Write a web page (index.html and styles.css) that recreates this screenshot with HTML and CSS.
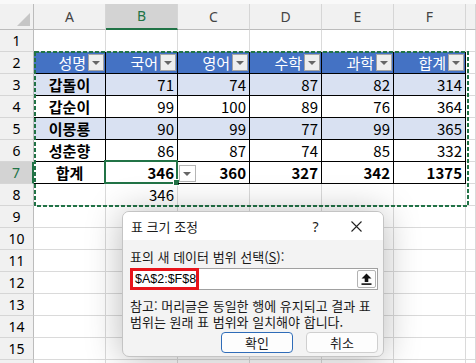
FILE: index.html
```html
<!DOCTYPE html>
<html lang="ko">
<head>
    <meta charset="UTF-8">
    <meta name="viewport" content="width=device-width, initial-scale=1.0">
    <title>표 크기 조정</title>
    <link rel="stylesheet" href="styles.css">
</head>
<body>
<div class="app">
    <div class="topstrip"></div>

    <div class="sheet">
        <div class="row colhead">
            <div class="corner"><span class="tri"></span></div>
            <div class="ch">A</div>
            <div class="ch sel">B</div>
            <div class="ch">C</div>
            <div class="ch">D</div>
            <div class="ch">E</div>
            <div class="ch">F</div>
            <div class="ch fill"></div>
        </div>

        <div class="row">
            <div class="rh">1</div>
            <div class="c"></div><div class="c"></div><div class="c"></div>
            <div class="c"></div><div class="c"></div><div class="c"></div>
            <div class="c fill"></div>
        </div>

        <div class="row thead">
            <div class="rh">2</div>
            <div class="c th"><span>성명</span><i class="flt"></i></div>
            <div class="c th"><span>국어</span><i class="flt"></i></div>
            <div class="c th"><span>영어</span><i class="flt"></i></div>
            <div class="c th"><span>수학</span><i class="flt"></i></div>
            <div class="c th"><span>과학</span><i class="flt"></i></div>
            <div class="c th"><span>합계</span><i class="flt"></i></div>
            <div class="c fill"></div>
        </div>

        <div class="row band">
            <div class="rh">3</div>
            <div class="c td name">갑돌이</div>
            <div class="c td num">71</div>
            <div class="c td num">74</div>
            <div class="c td num">87</div>
            <div class="c td num">82</div>
            <div class="c td num">314</div>
            <div class="c fill"></div>
        </div>

        <div class="row">
            <div class="rh">4</div>
            <div class="c td name">갑순이</div>
            <div class="c td num">99</div>
            <div class="c td num">100</div>
            <div class="c td num">89</div>
            <div class="c td num">76</div>
            <div class="c td num">364</div>
            <div class="c fill"></div>
        </div>

        <div class="row band">
            <div class="rh">5</div>
            <div class="c td name">이몽룡</div>
            <div class="c td num">90</div>
            <div class="c td num">99</div>
            <div class="c td num">77</div>
            <div class="c td num">99</div>
            <div class="c td num">365</div>
            <div class="c fill"></div>
        </div>

        <div class="row">
            <div class="rh">6</div>
            <div class="c td name">성춘향</div>
            <div class="c td num">86</div>
            <div class="c td num">87</div>
            <div class="c td num">74</div>
            <div class="c td num">85</div>
            <div class="c td num">332</div>
            <div class="c fill"></div>
        </div>

        <div class="row total">
            <div class="rh sel">7</div>
            <div class="c td name">합계</div>
            <div class="c td num active">346</div>
            <div class="c td num drop-host">360<i class="tdrop"></i></div>
            <div class="c td num">327</div>
            <div class="c td num">342</div>
            <div class="c td num">1375</div>
            <div class="c fill"></div>
        </div>

        <div class="row">
            <div class="rh">8</div>
            <div class="c"></div>
            <div class="c num">346</div>
            <div class="c"></div><div class="c"></div><div class="c"></div><div class="c"></div>
            <div class="c fill"></div>
        </div>

        <div class="row"><div class="rh">9</div><div class="c"></div><div class="c"></div><div class="c"></div><div class="c"></div><div class="c"></div><div class="c"></div><div class="c fill"></div></div>
        <div class="row"><div class="rh">10</div><div class="c"></div><div class="c"></div><div class="c"></div><div class="c"></div><div class="c"></div><div class="c"></div><div class="c fill"></div></div>
        <div class="row"><div class="rh">11</div><div class="c"></div><div class="c"></div><div class="c"></div><div class="c"></div><div class="c"></div><div class="c"></div><div class="c fill"></div></div>
        <div class="row"><div class="rh">12</div><div class="c"></div><div class="c"></div><div class="c"></div><div class="c"></div><div class="c"></div><div class="c"></div><div class="c fill"></div></div>
        <div class="row"><div class="rh">13</div><div class="c"></div><div class="c"></div><div class="c"></div><div class="c"></div><div class="c"></div><div class="c"></div><div class="c fill"></div></div>
        <div class="row"><div class="rh">14</div><div class="c"></div><div class="c"></div><div class="c"></div><div class="c"></div><div class="c"></div><div class="c"></div><div class="c fill"></div></div>
        <div class="row"><div class="rh">15</div><div class="c"></div><div class="c"></div><div class="c"></div><div class="c"></div><div class="c"></div><div class="c"></div><div class="c fill"></div></div>
        <div class="row"><div class="rh"></div><div class="c"></div><div class="c"></div><div class="c"></div><div class="c"></div><div class="c"></div><div class="c"></div><div class="c fill"></div></div>
    </div>

    <!-- marching ants around A2:F8 -->
    <svg class="ants" width="435" height="156" viewBox="0 0 435 156">
        <rect x="1" y="1" width="433" height="154" fill="none" stroke="#217346" stroke-width="2" stroke-dasharray="4 2"/>
    </svg>

    <div class="dialog">
        <div class="dlg-title">
            <span class="dlg-name">표 크기 조정</span>
            <span class="cap">?</span>
            <span class="cap">
                <svg width="11" height="11" viewBox="0 0 11 11"><path d="M0.5 0.5 L10.5 10.5 M10.5 0.5 L0.5 10.5" stroke="#222" stroke-width="1.1"/></svg>
            </span>
        </div>
        <div class="dlg-body">
            <div class="lbl">표의 새 데이터 범위 선택(<u>S</u>):</div>
            <div class="inp">
                <span class="ref">$A$2:$F$8</span>
                <span class="pick">
                    <svg width="11" height="12" viewBox="0 0 11 12"><path d="M5.5 0.5 L10.5 5.5 L7.3 5.5 L7.3 9 L3.7 9 L3.7 5.5 L0.5 5.5 Z" fill="#111"/><rect x="0.5" y="10.3" width="10" height="1.6" fill="#111"/></svg>
                </span>
            </div>
            <p class="note">참고: 머리글은 동일한 행에 유지되고 결과 표<br>범위는 원래 표 범위와 일치해야 합니다.</p>
            <div class="btns">
                <span class="btn primary">확인</span>
                <span class="btn">취소</span>
            </div>
        </div>
    </div>
</div>
</body>
</html>
```

FILE: styles.css
```css
body {
    margin: 0;
    font-family: "Noto Sans CJK KR", "Noto Sans", sans-serif;
    background-color: #fff;
    overflow: hidden;
}
.app {
    position: relative;
    width: 476px;
    height: 363px;
    overflow: hidden;
}
.topstrip {
    height: 4px;
    background-color: #f9f9f9;
}

/* grid */
.row {
    display: flex;
    height: 22px;
}
.row > div {
    box-sizing: border-box;
    flex: none;
    height: 100%;
    border-right: 1px solid #dadada;
    border-bottom: 1px solid #dadada;
    font-size: 15px;
    line-height: 21px;
    color: #000;
}
.row > .fill {
    flex: 1;
}
.c {
    width: 72px;
}
.colhead {
    height: 26px;
}
.colhead > div {
    background-color: #f1f1f1;
    border-bottom-color: #bcbcbc;
    color: #444;
    font-family: "Noto Sans", sans-serif;
    font-size: 14px;
    line-height: 25px;
    text-align: center;
}
.colhead > .ch {
    width: 72px;
    border-right-color: #d6d6d6;
}
.corner {
    position: relative;
    width: 34px;
    border-right-color: #bcbcbc !important;
}
.tri {
    position: absolute;
    right: 3px;
    bottom: 3px;
    width: 13px;
    height: 13px;
    background-color: #c6c6c6;
    clip-path: polygon(100% 0, 100% 100%, 0 100%);
}
.colhead > .ch.sel {
    background-color: #d3d3d3;
    color: #217346;
    border-bottom: 2px solid #217346;
    line-height: 24px;
}
.rh {
    width: 34px;
    background-color: #f1f1f1;
    border-right-color: #bcbcbc !important;
    border-bottom-color: #d6d6d6 !important;
    color: #444;
    font-family: "Noto Sans", sans-serif;
    font-size: 14px !important;
    text-align: center;
}
.rh.sel {
    background-color: #d3d3d3;
    color: #217346;
    border-right: 2px solid #217346 !important;
}

/* table */
.td, .th {
    border-right-color: #000 !important;
    border-bottom-color: #000 !important;
}
.th {
    display: flex;
    align-items: center;
    justify-content: flex-end;
    gap: 2px;
    padding-right: 1px;
    background-color: #4472c4;
    color: #fff !important;
}
.flt {
    box-sizing: border-box;
    width: 16px;
    height: 17px;
    background-color: #eeeeee;
    border: 1px solid #a3a3a3;
    position: relative;
}
.flt::after, .tdrop::after {
    content: "";
    position: absolute;
    left: 3px;
    top: 6px;
    border-left: 4px solid transparent;
    border-right: 4px solid transparent;
    border-top: 4px solid #666;
}
.band .td {
    background-color: #d9e1f2;
}
.name {
    font-weight: bold;
    text-align: center;
}
.num {
    text-align: right;
    padding-right: 3px;
}
.total .td {
    font-weight: bold;
}
.active {
    position: relative;
}
.active::before {
    content: "";
    position: absolute;
    left: -2px;
    top: -2px;
    right: -1px;
    bottom: -1px;
    border: 2px solid #217346;
}
.active::after {
    content: "";
    position: absolute;
    right: -3px;
    bottom: -3px;
    width: 5px;
    height: 5px;
    background-color: #217346;
    border: 1px solid #fff;
}
.drop-host {
    position: relative;
}
.tdrop {
    position: absolute;
    left: 1px;
    top: 3px;
    box-sizing: border-box;
    width: 17px;
    height: 17px;
    background-color: #fff;
    border: 1px solid #b5b5b5;
}

.ants {
    position: absolute;
    left: 34px;
    top: 51px;
}

/* dialog */
.dialog {
    position: absolute;
    left: 122px;
    top: 211px;
    width: 262px;
    height: 146px;
    box-sizing: border-box;
    border: 1px solid #c4c4c4;
    border-radius: 7px;
    background-color: #f3f3f3;
    box-shadow: 0 2px 36px rgba(0, 0, 0, 0.28);
    overflow: hidden;
    font-size: 13px;
    color: #1a1a1a;
}
.dlg-title {
    display: flex;
    align-items: center;
    height: 28px;
    background-color: #fff;
}
.dlg-name {
    flex: 1;
    padding-left: 8px;
}
.cap {
    width: 41px;
    display: flex;
    justify-content: center;
    align-items: center;
    font-size: 14px;
    font-family: "Noto Sans", sans-serif;
}
.cap:last-child {
    margin-right: 6px;
}
.dlg-body {
    padding: 8px 5px 0 7px;
}
.lbl {
    line-height: 17px;
}
.inp {
    position: relative;
    margin-top: 3px;
    height: 22px;
    box-sizing: border-box;
    border: 1px solid #a0a0a0;
    background-color: #fff;
    display: flex;
    align-items: center;
    justify-content: space-between;
}
.ref {
    position: absolute;
    left: -1px;
    top: -1px;
    width: 69px;
    height: 22px;
    box-sizing: border-box;
    border: 3px solid #e8141b;
    padding-left: 2px;
    line-height: 16px;
    font-family: "Liberation Sans", Arial, sans-serif;
    font-size: 12.5px;
    color: #000;
}
.pick {
    margin-left: auto;
    margin-right: 1px;
    width: 19px;
    height: 18px;
    box-sizing: border-box;
    border: 1px solid #b3b3b3;
    border-radius: 2px;
    background-color: #fdfdfd;
    display: flex;
    align-items: center;
    justify-content: center;
}
.note {
    margin: 8px 0 0;
    line-height: 16px;
}
.btns {
    display: flex;
    justify-content: flex-end;
    gap: 13px;
    margin-top: 2px;
}
.btn {
    width: 72px;
    height: 21px;
    box-sizing: border-box;
    border: 1px solid #cfcfcf;
    border-radius: 4px;
    background-color: #fdfdfd;
    text-align: center;
    line-height: 19px;
}
.btn.primary {
    border-color: #2f6cb8;
}
```
